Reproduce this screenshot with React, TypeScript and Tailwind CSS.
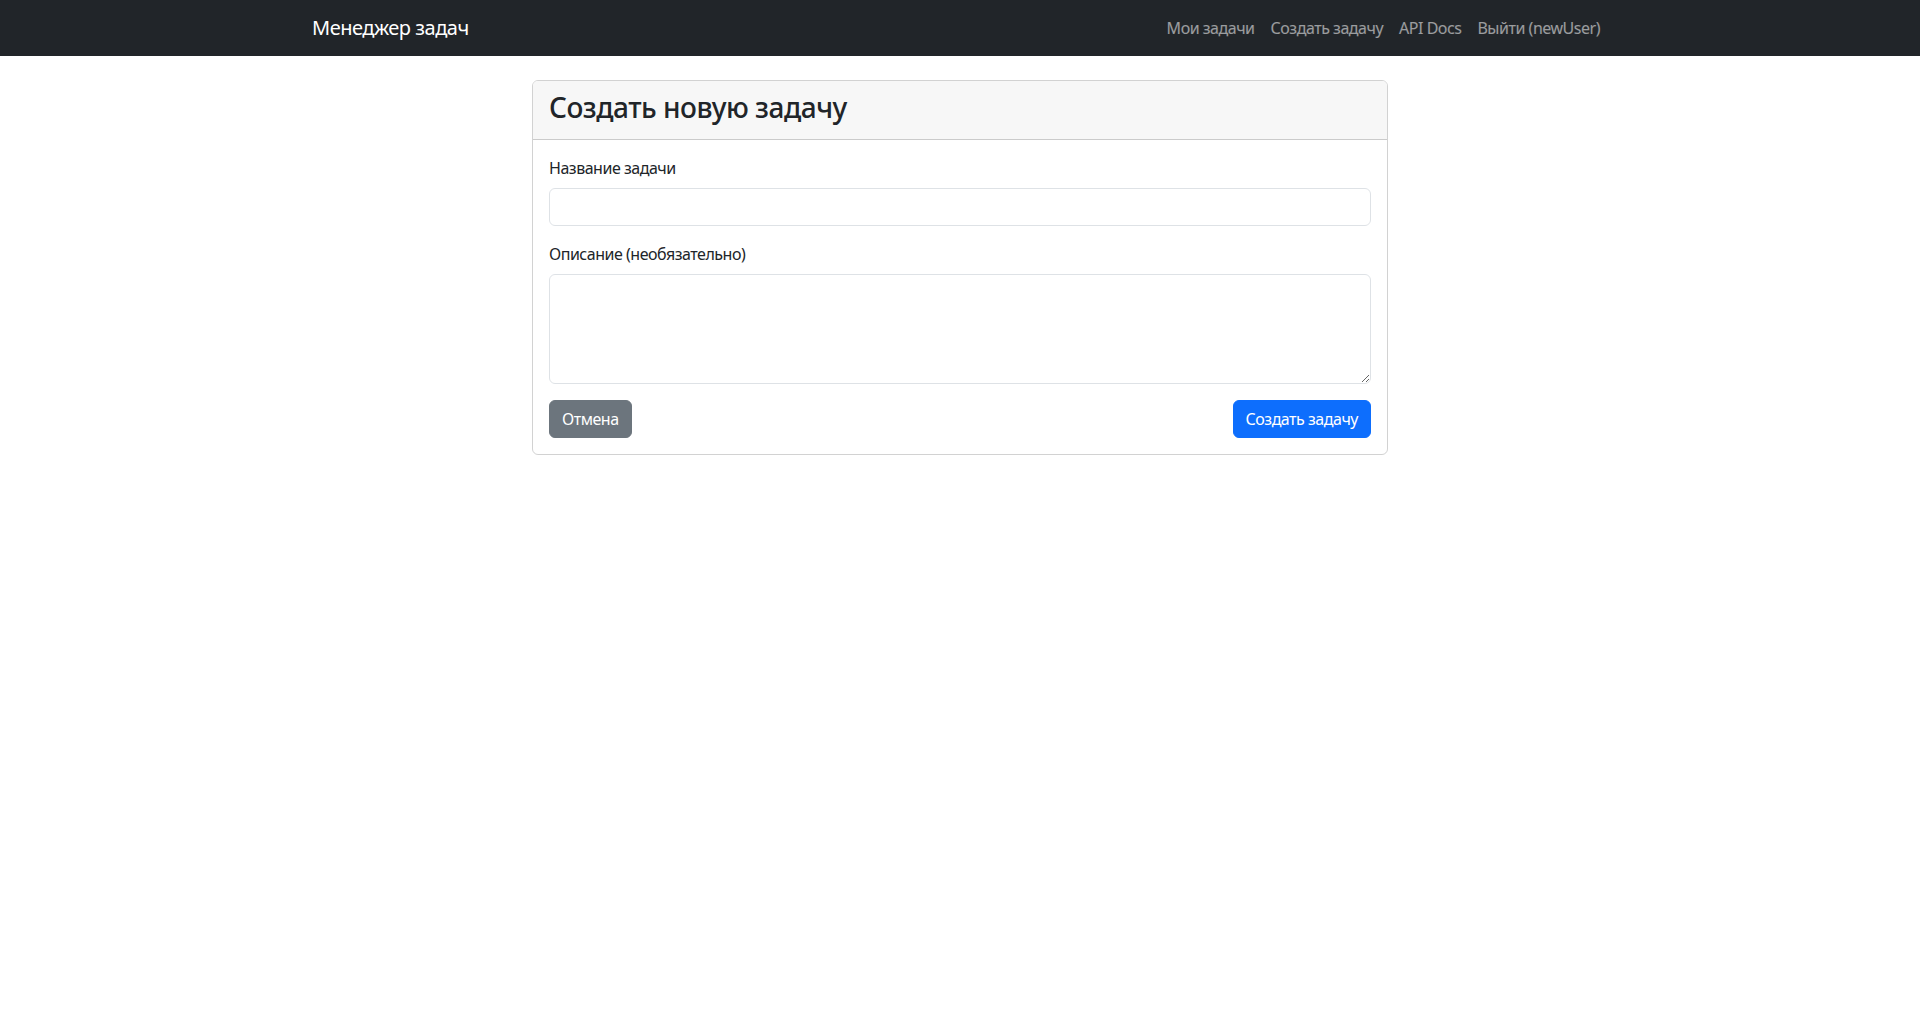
import React, { useState } from 'react';

const font = { fontFamily: '"Segoe UI", "Noto Sans", "Open Sans", sans-serif' };

const NAV_LINKS = ['Мои задачи', 'Создать задачу', 'API Docs', 'Выйти (newUser)'];

const Navbar: React.FC = () => (
  <nav className="bg-[#212529] py-2">
    <div className="max-w-[1320px] mx-auto px-3 flex items-center justify-between">
      <a href="#" className="text-white text-xl leading-[1.5] py-[5px] mr-4 no-underline">
        Менеджер задач
      </a>
      <ul className="flex items-center">
        {NAV_LINKS.map((link) => (
          <li key={link}>
            <a href="#" className="block px-2 py-2 text-base leading-6 text-white/55 hover:text-white/75">
              {link}
            </a>
          </li>
        ))}
      </ul>
    </div>
  </nav>
);

const App: React.FC = () => {
  const [title, setTitle] = useState('');
  const [description, setDescription] = useState('');

  return (
    <div className="min-h-screen bg-white text-[#212529] text-base leading-6 tracking-[-0.03em]" style={font}>
      <Navbar />

      <main className="max-w-[1320px] mx-auto px-3 mt-6">
        <div className="grid grid-cols-12 -mx-3">
          <div className="col-start-3 col-span-8 px-3">
            <div className="border border-black/[0.175] rounded-md overflow-hidden">
              {/* Card header */}
              <div className="bg-[#f7f7f7] border-b border-black/[0.175] px-4 py-2">
                <h3 className="text-[28px] leading-[1.2] font-medium mt-[2px] mb-[6px]">Создать новую задачу</h3>
              </div>

              {/* Card body */}
              <form className="p-4" onSubmit={(e) => e.preventDefault()}>
                <div className="mb-4">
                  <label htmlFor="title" className="block mb-2">Название задачи</label>
                  <input
                    id="title"
                    type="text"
                    value={title}
                    onChange={(e) => setTitle(e.target.value)}
                    className="block w-full h-[38px] px-3 py-1.5 border border-[#dee2e6] rounded-md outline-none focus:border-[#86b7fe]"
                  />
                </div>

                <div className="mb-4">
                  <label htmlFor="description" className="block mb-2">Описание (необязательно)</label>
                  <textarea
                    id="description"
                    rows={4}
                    value={description}
                    onChange={(e) => setDescription(e.target.value)}
                    className="block w-full h-[110px] px-3 py-1.5 border border-[#dee2e6] rounded-md outline-none focus:border-[#86b7fe]"
                  />
                </div>

                <div className="flex justify-between">
                  <a href="#" className="inline-block bg-[#6c757d] border border-[#6c757d] text-white px-3 py-1.5 rounded-md leading-6 hover:bg-[#5c636a]">
                    Отмена
                  </a>
                  <button type="submit" className="bg-[#0d6efd] border border-[#0d6efd] text-white px-3 py-1.5 rounded-md leading-6 hover:bg-[#0b5ed7]">
                    Создать задачу
                  </button>
                </div>
              </form>
            </div>
          </div>
        </div>
      </main>
    </div>
  );
};

export default App;
